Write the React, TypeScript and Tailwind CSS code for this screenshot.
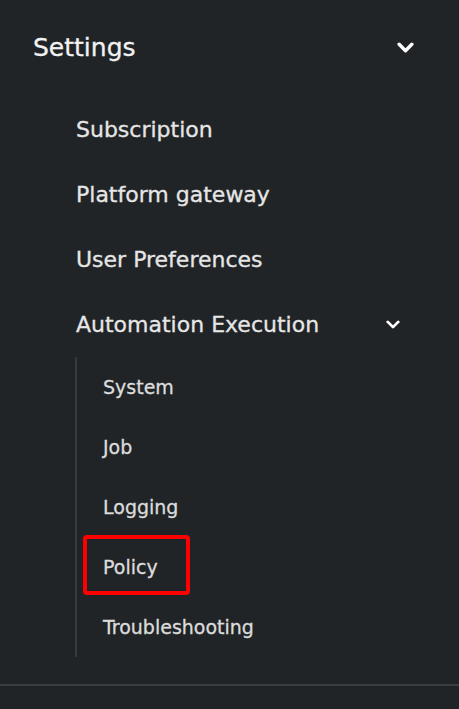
import React from "react";

function Chevron({ className }: { className?: string }) {
  return (
    <svg viewBox="0 0 16 10" className={className} fill="none">
      <path d="M2 2 L8 8 L14 2" stroke="currentColor" strokeWidth="3.2" strokeLinecap="round" strokeLinejoin="round" />
    </svg>
  );
}

export default function App() {
  const top = ["Subscription", "Platform gateway", "User Preferences"];
  const sub = ["System", "Job", "Logging", "Policy", "Troubleshooting"];
  return (
    <div
      className="w-[459px] h-[709px] bg-[#212427] overflow-hidden flex flex-col [-webkit-text-stroke:0.3px_currentColor]"
      style={{ fontFamily: '"DejaVu Sans", "Liberation Sans", sans-serif' }}
    >
      <div className="h-[94px] flex items-center justify-between pl-[33px] pr-[45px] shrink-0">
        <span className="text-[25px] text-[#f2f2f2] pt-[2px]">Settings</span>
        <Chevron className="w-[17px] h-[11px] text-white" />
      </div>
      <div className="pt-[3px] flex flex-col pl-[76px] pr-[59px]">
        {top.map((t) => (
          <div key={t} className="h-[65px] flex items-center text-[22px] text-[#e6e6e6]">
            {t}
          </div>
        ))}
        <div className="h-[65px] flex items-center justify-between text-[22px] text-[#e6e6e6]">
          <span>Automation Execution</span>
          <Chevron className="w-[14px] h-[9px] text-white" />
        </div>
        <div className="border-l-2 border-[#37393c] -ml-px flex flex-col">
          {sub.map((s) => (
            <div key={s} className="relative h-[60px] flex items-center pl-[26px] text-[19px] text-[#dcdcdc]">
              {s}
              {s === "Policy" && (
                <div className="absolute top-[-2px] left-[6px] w-[107px] h-[60px] border-4 border-[#ff0000] rounded-[4px]" />
              )}
            </div>
          ))}
        </div>
      </div>
      <div className="mt-[27px] h-[2px] bg-[#3a3d40] shrink-0" />
    </div>
  );
}
